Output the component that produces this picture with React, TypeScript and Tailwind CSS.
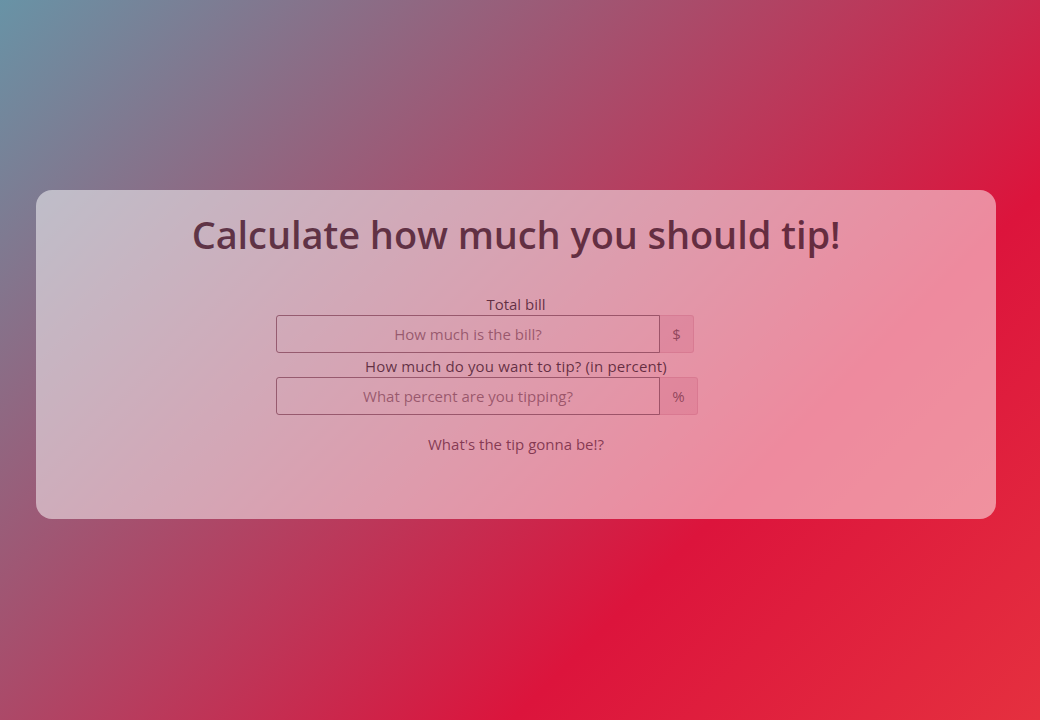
import React, { useState } from 'react';

const App: React.FC = () => {
  const [bill, setBill] = useState('');
  const [percent, setPercent] = useState('');

  const b = parseFloat(bill);
  const p = parseFloat(percent);
  const tip = !isNaN(b) && !isNaN(p) ? ((b * p) / 100).toFixed(2) : null;

  return (
    <div className="min-h-[720px] w-full bg-[linear-gradient(135deg,#6893a6_0%,#dc143c_70%,#e5303f_100%)] pt-[190px] font-['Open_Sans','Noto_Sans',sans-serif]">
      <div className="ml-[36px] mr-[44px] h-[329px] rounded-2xl bg-white/50 pt-[14px] text-center">
        <h1 className="text-[38px] font-semibold leading-[60px] tracking-[-0.1px] text-[#3c0a1e]/75">
          Calculate how much you should tip!
        </h1>

        <div className="mx-auto mt-[29px] flex w-[480px] flex-col text-[15px] text-[#3c0a1e]/75">
          <label className="leading-[22px]">Total bill</label>
          <div className="flex h-[38px]">
            <input
              value={bill}
              onChange={(e) => setBill(e.target.value)}
              placeholder="How much is the bill?"
              className="w-[384px] rounded-l-[3px] border border-[#6e2840]/60 bg-transparent text-center text-[15px] outline-none placeholder:text-[#6e2840]/60"
            />
            <span className="flex w-[34px] items-center justify-center rounded-r-[3px] border border-l-0 border-[#b03a5a]/15 bg-[#c0406a]/15 text-[#6e2840]/70">
              $
            </span>
          </div>

          <label className="mt-[2px] leading-[22px] tracking-[0.15px]">How much do you want to tip? (in percent)</label>
          <div className="flex h-[38px]">
            <input
              value={percent}
              onChange={(e) => setPercent(e.target.value)}
              placeholder="What percent are you tipping?"
              className="w-[384px] rounded-l-[3px] border border-[#6e2840]/60 bg-transparent text-center text-[15px] outline-none placeholder:text-[#6e2840]/60"
            />
            <span className="flex w-[38px] items-center justify-center rounded-r-[3px] border border-l-0 border-[#b03a5a]/15 bg-[#c0406a]/15 text-[#6e2840]/70">
              %
            </span>
          </div>

          <p className="mt-[18px] leading-[22px] text-[#6e1f3c]/80">
            {tip ? `The tip is $${tip}` : "What's the tip gonna be!?"}
          </p>
        </div>
      </div>
    </div>
  );
};

export default App;
